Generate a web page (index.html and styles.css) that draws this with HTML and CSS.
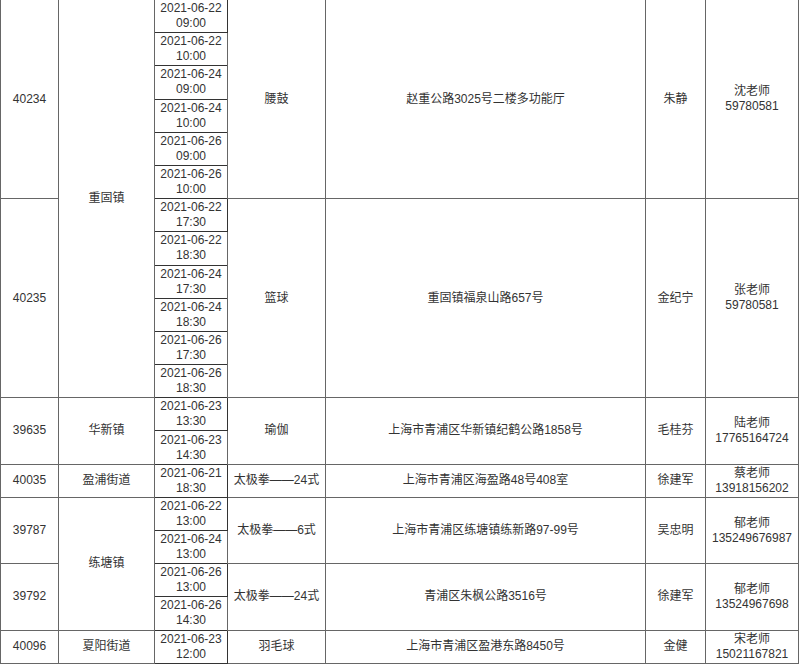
FILE: index.html
```html
<!DOCTYPE html>
<html lang="zh">
<head>
<meta charset="utf-8">
<title>活动安排</title>
<link rel="stylesheet" href="styles.css">
</head>
<body>
<table class="sched">
<colgroup>
<col class="c-id"><col class="c-town"><col class="c-time"><col class="c-act"><col class="c-addr"><col class="c-tch"><col class="c-contact">
</colgroup>
<tbody>
<tr>
<td rowspan="6">40234</td>
<td rowspan="12">重固镇</td>
<td class="t">2021-06-22<br>09:00</td>
<td rowspan="6">腰鼓</td>
<td rowspan="6">赵重公路3025号二楼多功能厅</td>
<td rowspan="6">朱静</td>
<td rowspan="6">沈老师<br>59780581</td>
</tr>
<tr><td class="t">2021-06-22<br>10:00</td></tr>
<tr><td class="t">2021-06-24<br>09:00</td></tr>
<tr><td class="t">2021-06-24<br>10:00</td></tr>
<tr><td class="t">2021-06-26<br>09:00</td></tr>
<tr><td class="t">2021-06-26<br>10:00</td></tr>
<tr>
<td rowspan="6">40235</td>
<td class="t">2021-06-22<br>17:30</td>
<td rowspan="6">篮球</td>
<td rowspan="6">重固镇福泉山路657号</td>
<td rowspan="6">金纪宁</td>
<td rowspan="6">张老师<br>59780581</td>
</tr>
<tr><td class="t">2021-06-22<br>18:30</td></tr>
<tr><td class="t">2021-06-24<br>17:30</td></tr>
<tr><td class="t">2021-06-24<br>18:30</td></tr>
<tr><td class="t">2021-06-26<br>17:30</td></tr>
<tr><td class="t">2021-06-26<br>18:30</td></tr>
<tr>
<td rowspan="2">39635</td>
<td rowspan="2">华新镇</td>
<td class="t">2021-06-23<br>13:30</td>
<td rowspan="2">瑜伽</td>
<td rowspan="2">上海市青浦区华新镇纪鹤公路1858号</td>
<td rowspan="2">毛桂芬</td>
<td rowspan="2">陆老师<br>17765164724</td>
</tr>
<tr><td class="t">2021-06-23<br>14:30</td></tr>
<tr>
<td>40035</td>
<td>盈浦街道</td>
<td class="t">2021-06-21<br>18:30</td>
<td>太极拳——24式</td>
<td>上海市青浦区海盈路48号408室</td>
<td>徐建军</td>
<td>蔡老师<br>13918156202</td>
</tr>
<tr>
<td rowspan="2">39787</td>
<td rowspan="4">练塘镇</td>
<td class="t">2021-06-22<br>13:00</td>
<td rowspan="2">太极拳——6式</td>
<td rowspan="2">上海市青浦区练塘镇练新路97-99号</td>
<td rowspan="2">吴忠明</td>
<td rowspan="2">郁老师<br>135249676987</td>
</tr>
<tr><td class="t">2021-06-24<br>13:00</td></tr>
<tr>
<td rowspan="2">39792</td>
<td class="t">2021-06-26<br>13:00</td>
<td rowspan="2">太极拳——24式</td>
<td rowspan="2">青浦区朱枫公路3516号</td>
<td rowspan="2">徐建军</td>
<td rowspan="2">郁老师<br>13524967698</td>
</tr>
<tr><td class="t">2021-06-26<br>14:30</td></tr>
<tr>
<td>40096</td>
<td>夏阳街道</td>
<td class="t">2021-06-23<br>12:00</td>
<td>羽毛球</td>
<td>上海市青浦区盈港东路8450号</td>
<td>金健</td>
<td>宋老师<br>15021167821</td>
</tr>
</tbody>
</table>
</body>
</html>
```
FILE: styles.css
```css
html, body {
  margin: 0;
  padding: 0;
  background: #ffffff;
}
body {
  font-family: "Liberation Sans", Arial, "Noto Sans CJK SC", sans-serif;
  font-size: 12px;
  color: #333333;
}
.sched {
  border-collapse: collapse;
  table-layout: fixed;
  width: 798px;
  margin-top: -1px;
}
.c-id { width: 58px; }
.c-town { width: 96px; }
.c-time { width: 73px; }
.c-act { width: 98px; }
.c-addr { width: 320px; }
.c-tch { width: 60px; }
.c-contact { width: 93px; }
.sched tr {
  height: 33.2px;
}
.sched td {
  border: 1px solid #666666;
  padding: 0;
  text-align: center;
  vertical-align: middle;
  line-height: 15px;
  white-space: nowrap;
}
.sched td.t {
  border-color: #333333;
}
```
